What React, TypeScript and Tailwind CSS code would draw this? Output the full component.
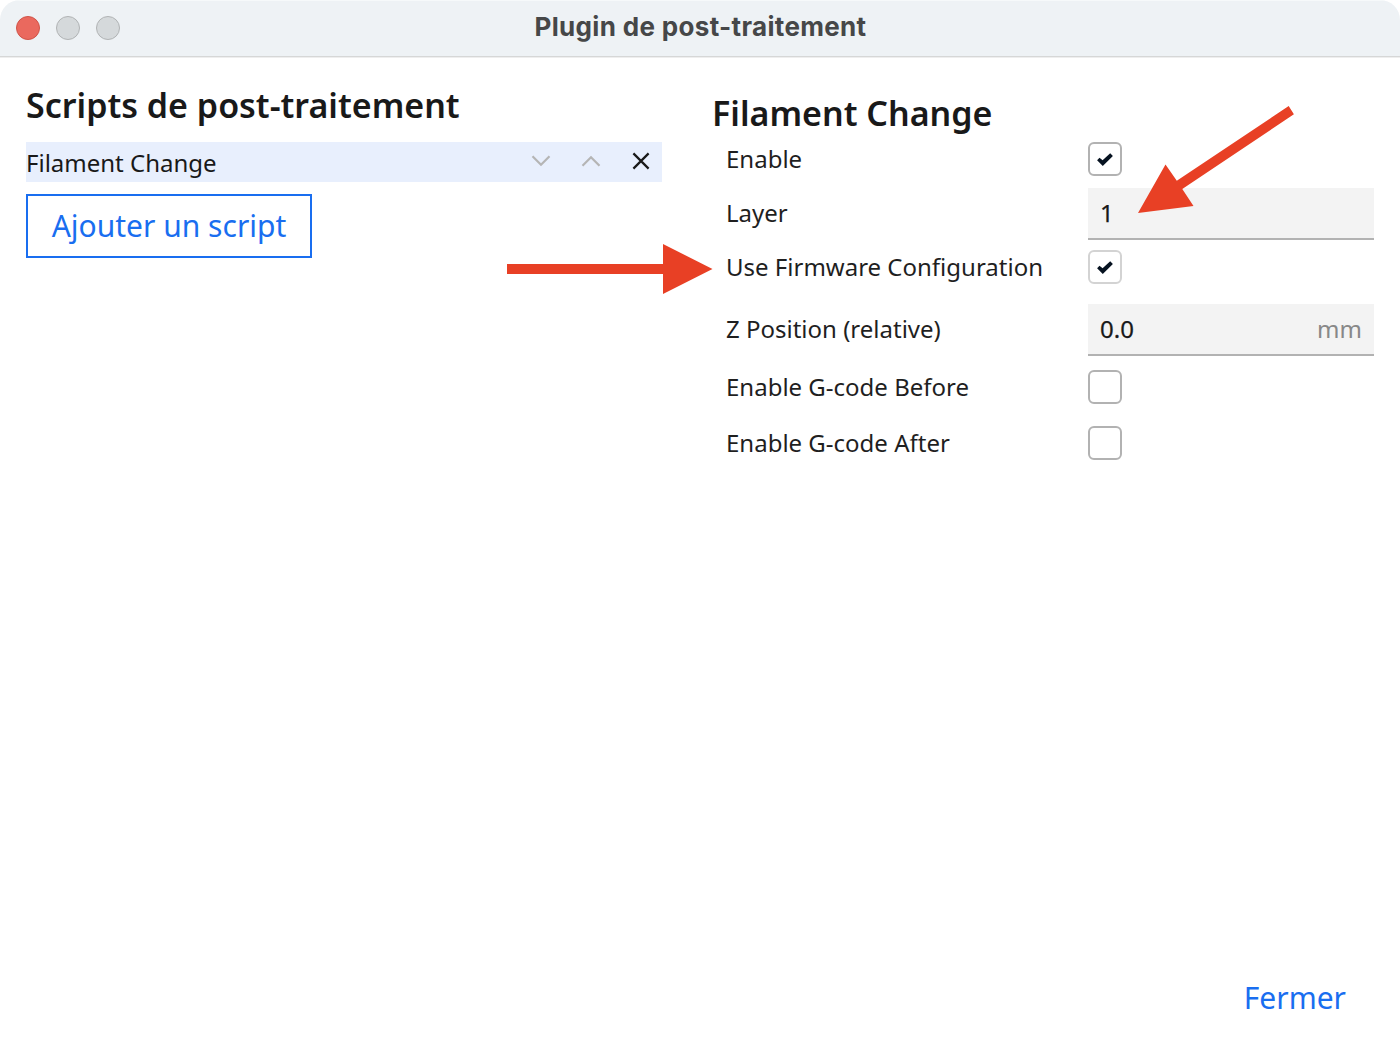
import type { ReactNode } from "react";

function Check() {
  return (
    <svg width="34" height="34" viewBox="0 0 34 34" className="-m-[2px] block shrink-0">
      <path d="M9.100 18.200l2.400-2.400 3.100 2.400 7.600-6.900 2.700 2.800-10.100 10z" fill="#061220" />
    </svg>
  );
}

function Checkbox({ checked, light }: { checked?: boolean; light?: boolean }) {
  return (
    <span
      className={`flex size-[34px] shrink-0 rounded-[6px] border-2 bg-white ${
        light ? "border-[#d3d3d3]" : "border-[#b2b2b2]"
      }`}
    >
      {checked && <Check />}
    </span>
  );
}

function Field({ value, unit }: { value: string; unit?: string }) {
  return (
    <div className="flex h-[52px] w-[286px] items-center justify-between border-b-2 border-[#b2b2b2] bg-[#f3f3f3] px-3">
      <span className="text-[#191919] [-webkit-text-stroke:0.25px_#191919]">{value}</span>
      {unit && <span className="text-[#888888]">{unit}</span>}
    </div>
  );
}

function Row({ label, className, children }: { label: string; className: string; children: ReactNode }) {
  return (
    <div className={`flex items-center ${className}`}>
      <span className="w-[362px] whitespace-nowrap text-[#1f1f1f]">{label}</span>
      {children}
    </div>
  );
}

export default function App() {
  return (
    <div className="relative flex h-[1056px] w-[1400px] flex-col overflow-hidden rounded-t-[20px] bg-white font-['Noto_Sans',sans-serif] text-[24px] leading-[32px] text-[#191919]">
      <header className="flex h-[57px] shrink-0 items-center border-b border-[#d6d7d7] bg-[#eef2f5] px-4 shadow-[inset_0_1px_0_#f6f9fa]">
        <div className="flex w-[104px] gap-4">
          <span className="size-6 rounded-full border border-[#cf5448] bg-[#ea695e]" />
          <span className="size-6 rounded-full border border-[#b0b3b4] bg-[#d5d9db]" />
          <span className="size-6 rounded-full border border-[#b0b3b4] bg-[#d5d9db]" />
        </div>
        <h1 className="-mt-0.5 flex-1 pr-[103px] text-center font-['Inter',sans-serif] text-[26px] font-bold tracking-[0.33px] text-[#464748]">
          Plugin de post-traitement
        </h1>
      </header>

      <main className="flex flex-1 gap-[50px] border-t border-[#eeeeee] px-[26px]">
        <section className="w-[636px]">
          <h2 className="mt-[23px] text-[34px] leading-[48px] font-semibold">Scripts de post-traitement</h2>
          <div className="mt-[13px] flex h-10 items-center bg-[#e8effd]">
            <span className="flex-1 pt-0.5">Filament Change</span>
            <div className="flex gap-[30px] pr-[11px]">
              <svg width="20" height="20" viewBox="0 0 20 20" fill="none" stroke="#b5b5b5" strokeWidth="2.200">
                <path d="M1.500 4.200l8.500 8.500 8.500-8.500" />
              </svg>
              <svg width="20" height="20" viewBox="0 0 20 20" fill="none" stroke="#b5b5b5" strokeWidth="2.200">
                <path d="M1.500 13.800l8.500-8.500 8.500 8.500" />
              </svg>
              <svg width="20" height="20" viewBox="0 0 20 20" fill="none" stroke="#191919" strokeWidth="2.200">
                <path d="M2.400 1.400l15.200 15.200M17.600 1.400L2.400 16.600" />
              </svg>
            </div>
          </div>
          <button className="mt-3 flex h-16 w-[286px] items-center justify-center border-2 border-[#196ef0] text-[30px] text-[#196ef0]">
            Ajouter un script
          </button>
        </section>

        <section className="w-[662px]">
          <h2 className="mt-[31px] text-[34px] leading-[48px] font-semibold">Filament Change</h2>
          <div className="flex flex-col pl-[14px]">
            <Row label="Enable" className="mt-[5px] h-[34px]">
              <Checkbox checked />
            </Row>
            <Row label="Layer" className="mt-3 h-[52px] *:first:-mt-0.5">
              <Field value="1" />
            </Row>
            <Row label="Use Firmware Configuration" className="mt-2.5 h-[34px]">
              <Checkbox checked light />
            </Row>
            <Row label="Z Position (relative)" className="mt-5 h-[52px] *:first:-mt-0.5">
              <Field value="0.0" unit="mm" />
            </Row>
            <Row label="Enable G-code Before" className="mt-3.5 h-[34px]">
              <Checkbox />
            </Row>
            <Row label="Enable G-code After" className="mt-[22px] h-[34px]">
              <Checkbox />
            </Row>
          </div>
        </section>
      </main>

      <footer className="flex shrink-0 justify-end pr-[54px] pb-[38px]">
        <button className="text-[30px] leading-[40px] text-[#196ef0]">Fermer</button>
      </footer>

      <svg
        className="pointer-events-none absolute top-[100px] left-[500px]"
        width="800"
        height="200"
        viewBox="500 100 800 200"
        fill="#e84025"
      >
        <path d="M507 264h156v-20l49.500 25-49.500 25v-20H507z" />
        <path d="M1138 213l27.500-48.500 11.300 16.300L1288.700 106l5.200 8.300L1182.300 189l11.200 17z" />
      </svg>
    </div>
  );
}
